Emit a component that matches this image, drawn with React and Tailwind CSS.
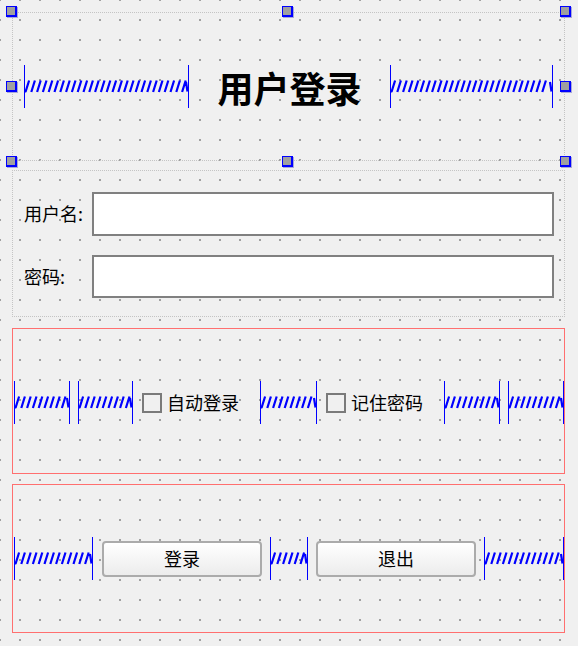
import React from "react";

function Spacer({ w }) {
  const h = 43;
  const parts = [];
  const n = Math.floor((w - 6) / 5.8) + 1;
  for (let i = 0; i < n; i++) {
    const x = 1.5 + i * 5.8;
    if (x + 4 > w - 1) break;
    parts.push(`M${x.toFixed(2)} 27 L${(x + 3.6).toFixed(2)} 15.5`);
  }
  const d = `M1 26.5 L2 26.5 ` + parts.join(" ") + ` M${w - 3} 17 L${w - 1.5} 26.5`;
  return (
    <svg width={w} height={h} className="block shrink-0" viewBox={`0 0 ${w} ${h}`}>
      <path d={d} stroke="#0000ff" strokeWidth="2.2" fill="none" />
      <line x1="0.5" y1="0" x2="0.5" y2={h} stroke="#0000ff" strokeWidth="1" />
      <line x1={w - 0.5} y1="0" x2={w - 0.5} y2={h} stroke="#0000ff" strokeWidth="1" />
    </svg>
  );
}

function Handle({ x, y }) {
  return (
    <div
      className="absolute w-[11px] h-[11px] bg-[#a0a0a0] border-l border-t border-r-2 border-b-2 border-[#0000ff] shadow-[1px_1px_0_#a8a8d8]"
      style={{ left: x, top: y }}
    />
  );
}

function CheckItem({ label }) {
  return (
    <div className="flex items-center shrink-0">
      <div className="w-[20px] h-[20px] border-2 border-[#7a7a7a] bg-[#f0f0f0]" />
      <span className="ml-[5px] w-[72px] text-[18px] leading-none text-black whitespace-nowrap -translate-y-[1px]">{label}</span>
    </div>
  );
}

function Btn({ label }) {
  return (
    <div className="w-[160px] h-[36px] shrink-0 rounded-[4px] border-2 border-[#ababab] bg-gradient-to-b from-[#ffffff] to-[#ececec] flex items-center justify-center text-[18px] leading-none text-black">
      <span className="-translate-y-[1px]">{label}</span>
    </div>
  );
}

export default function App() {
  return (
    <div
      className="relative w-[578px] h-[646px] overflow-hidden flex flex-col font-['Noto_Sans_CJK_SC','Noto_Sans',sans-serif] bg-[#a0a0a0] bg-[linear-gradient(to_bottom,transparent_2px,#f0f0f0_2px),linear-gradient(to_right,transparent_2px,#f0f0f0_2px)] bg-[size:20px_20px] bg-[position:-1px_-1px]"
    >
      {/* Title layout */}
      <div className="mt-[12px] ml-[12px] w-[553px] h-[149px] shrink-0 border border-dotted border-[#c4c4c4] flex items-center pl-[11px] pr-[11px]">
        <Spacer w={165} />
        <div className="flex-1 flex justify-center">
          <span className="text-[36px] font-bold leading-none text-black">用户登录</span>
        </div>
        <Spacer w={163} />
      </div>

      {/* Form layout */}
      <div className="mt-[9px] ml-[12px] w-[553px] h-[147px] shrink-0 border border-dotted border-[#c4c4c4] pt-[21px] pl-[11px] flex flex-col gap-[19px]">
        <div className="flex items-center">
          <span className="w-[68px] text-[18px] leading-none text-black -translate-y-[1px]">用户名:</span>
          <div className="w-[462px] h-[44px] border-2 border-[#808080] bg-white" />
        </div>
        <div className="flex items-center">
          <span className="w-[68px] text-[18px] leading-none text-black -translate-y-[1px]">密码:</span>
          <div className="w-[462px] h-[43px] border-2 border-[#808080] bg-white" />
        </div>
      </div>

      {/* Checkbox layout */}
      <div className="mt-[11px] ml-[12px] w-[553px] h-[146px] shrink-0 border border-[#ff6f6f] pt-[52px] pl-[1px] flex items-start">
        <div className="flex items-center h-[43px]">
          <Spacer w={56} />
          <div className="ml-[8px]"><Spacer w={55} /></div>
          <div className="ml-[9px]"><CheckItem label="自动登录" /></div>
          <div className="ml-[21px]"><Spacer w={57} /></div>
          <div className="ml-[9px]"><CheckItem label="记住密码" /></div>
          <div className="ml-[21px]"><Spacer w={56} /></div>
          <div className="ml-[8px]"><Spacer w={56} /></div>
        </div>
      </div>

      {/* Button layout */}
      <div className="mt-[10px] ml-[12px] w-[553px] h-[149px] shrink-0 border border-[#ff6f6f] pt-[52px] pl-[1px] flex items-start">
        <div className="flex items-center h-[43px]">
          <Spacer w={79} />
          <div className="ml-[9px]"><Btn label="登录" /></div>
          <div className="ml-[8px]"><Spacer w={38} /></div>
          <div className="ml-[8px]"><Btn label="退出" /></div>
          <div className="ml-[8px]"><Spacer w={80} /></div>
        </div>
      </div>

      <Handle x={6} y={6} />
      <Handle x={282} y={6} />
      <Handle x={560} y={6} />
      <Handle x={6} y={81} />
      <Handle x={560} y={81} />
      <Handle x={6} y={156} />
      <Handle x={282} y={156} />
      <Handle x={560} y={156} />
    </div>
  );
}
